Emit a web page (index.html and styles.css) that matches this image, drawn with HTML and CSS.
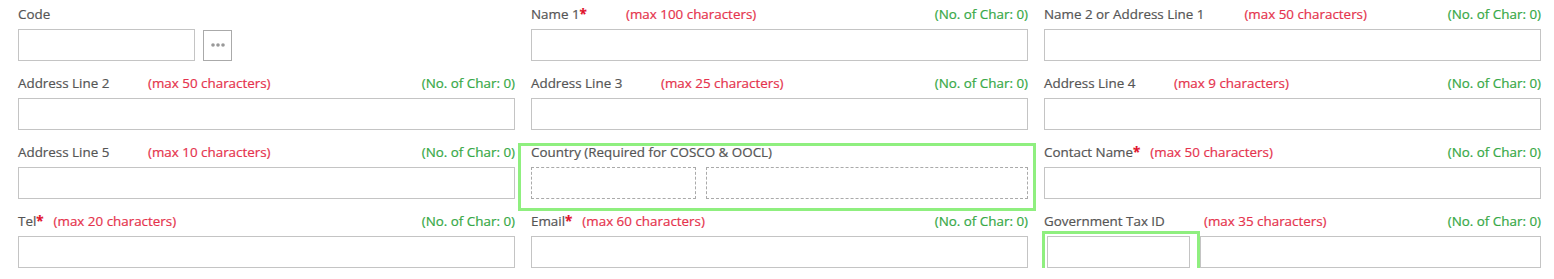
FILE: index.html
```html
<!DOCTYPE html>
<html lang="en">
<head>
    <meta charset="UTF-8">
    <title>Customer Details</title>
    <link rel="stylesheet" href="styles.css">
</head>
<body>
    <div class="form-grid">
        <div class="campo">
            <div class="campo-label"><span class="nombre">Code</span></div>
            <div class="campo-fila">
                <input type="text" class="input-code">
                <button class="btn-buscar" type="button">
                    <svg width="14" height="4" viewBox="0 0 14 4"><circle cx="2" cy="2" r="1.8" fill="#999"/><circle cx="7" cy="2" r="1.8" fill="#999"/><circle cx="12" cy="2" r="1.8" fill="#999"/></svg>
                </button>
            </div>
        </div>

        <div class="campo">
            <div class="campo-label">
                <span class="nombre n-name1">Name 1<b>*</b></span>
                <span class="max">(max 100 characters)</span>
                <span class="contador">(No. of Char: 0)</span>
            </div>
            <input type="text" class="input">
        </div>

        <div class="campo">
            <div class="campo-label">
                <span class="nombre">Name 2 or Address Line 1</span>
                <span class="max">(max 50 characters)</span>
                <span class="contador">(No. of Char: 0)</span>
            </div>
            <input type="text" class="input">
        </div>

        <div class="campo">
            <div class="campo-label">
                <span class="nombre n-130">Address Line 2</span>
                <span class="max">(max 50 characters)</span>
                <span class="contador">(No. of Char: 0)</span>
            </div>
            <input type="text" class="input">
        </div>

        <div class="campo">
            <div class="campo-label">
                <span class="nombre n-130">Address Line 3</span>
                <span class="max">(max 25 characters)</span>
                <span class="contador">(No. of Char: 0)</span>
            </div>
            <input type="text" class="input">
        </div>

        <div class="campo">
            <div class="campo-label">
                <span class="nombre n-130">Address Line 4</span>
                <span class="max">(max 9 characters)</span>
                <span class="contador">(No. of Char: 0)</span>
            </div>
            <input type="text" class="input">
        </div>

        <div class="campo">
            <div class="campo-label">
                <span class="nombre n-130">Address Line 5</span>
                <span class="max">(max 10 characters)</span>
                <span class="contador">(No. of Char: 0)</span>
            </div>
            <input type="text" class="input">
        </div>

        <div class="campo campo-resaltado">
            <div class="campo-label"><span class="nombre">Country (Required for COSCO &amp; OOCL)</span></div>
            <div class="campo-fila pais">
                <input type="text" class="input-dash pais-codigo">
                <input type="text" class="input-dash pais-nombre">
            </div>
        </div>

        <div class="campo">
            <div class="campo-label">
                <span class="nombre req">Contact Name<b>*</b></span>
                <span class="max">(max 50 characters)</span>
                <span class="contador">(No. of Char: 0)</span>
            </div>
            <input type="text" class="input">
        </div>

        <div class="campo">
            <div class="campo-label">
                <span class="nombre req">Tel<b>*</b></span>
                <span class="max">(max 20 characters)</span>
                <span class="contador">(No. of Char: 0)</span>
            </div>
            <input type="text" class="input">
        </div>

        <div class="campo">
            <div class="campo-label">
                <span class="nombre req">Email<b>*</b></span>
                <span class="max">(max 60 characters)</span>
                <span class="contador">(No. of Char: 0)</span>
            </div>
            <input type="text" class="input">
        </div>

        <div class="campo">
            <div class="campo-label">
                <span class="nombre n-160">Government Tax ID</span>
                <span class="max">(max 35 characters)</span>
                <span class="contador">(No. of Char: 0)</span>
            </div>
            <div class="campo-fila">
                <div class="tax-marco"><input type="text" class="input tax-tipo"></div>
                <input type="text" class="input tax-numero">
            </div>
        </div>
    </div>
</body>
</html>
```

FILE: styles.css
```css
body {
    font-family: "Open Sans", Arial, sans-serif;
    font-size: 13.4px;
    color: #555;
    margin: 0;
    padding: 5px 13px 0 18px;
    background-color: #fff;
}
.form-grid {
    display: grid;
    grid-template-columns: repeat(3, 1fr);
    column-gap: 16px;
    row-gap: 13px;
}
.campo {
    position: relative;
}
.campo-label {
    display: flex;
    align-items: flex-start;
    height: 24px;
    line-height: 18px;
    white-space: nowrap;
    -webkit-text-stroke: 0.2px currentColor;
}
.nombre {
    margin-right: 40px;
}
.nombre b {
    color: #e0102a;
    font-weight: bold;
}
.n-name1 {
    min-width: 95px;
    margin-right: 0;
}
.n-130 {
    min-width: 130px;
    margin-right: 0;
}
.n-160 {
    min-width: 160px;
    margin-right: 0;
}
.nombre.req {
    margin-right: 10px;
}
.max {
    color: #e5334d;
}
.contador {
    color: #36a846;
    margin-left: auto;
}
.input {
    display: block;
    box-sizing: border-box;
    width: 100%;
    height: 32px;
    border: 1px solid #c4c4c4;
    background: #fff;
    margin: 0;
}
.campo-fila {
    display: flex;
    align-items: center;
}
.input-code {
    box-sizing: border-box;
    width: 177px;
    height: 32px;
    border: 1px solid #c4c4c4;
    margin: 0 8px 0 0;
}
.btn-buscar {
    box-sizing: border-box;
    width: 29px;
    height: 31px;
    border: 1px solid #aaa;
    background: #fff;
    padding: 0;
    display: flex;
    align-items: center;
    justify-content: center;
}
.campo-resaltado::before {
    content: "";
    position: absolute;
    top: 0;
    left: -13px;
    right: -8px;
    bottom: -12px;
    border: 3px solid #8fef7f;
    pointer-events: none;
}
.pais {
    gap: 10px;
}
.input-dash {
    box-sizing: border-box;
    height: 32px;
    border: 1px dashed #aaa;
    background: #fff;
    margin: 0;
}
.pais-codigo {
    width: 165px;
}
.pais-nombre {
    flex-grow: 1;
}
.tax-marco {
    border: 3px solid #8fef7f;
    padding: 2px 7px 2px 2px;
    margin: -5px 0 -5px -2px;
}
.tax-tipo {
    width: 143px;
}
.tax-numero {
    flex-grow: 1;
}
```
